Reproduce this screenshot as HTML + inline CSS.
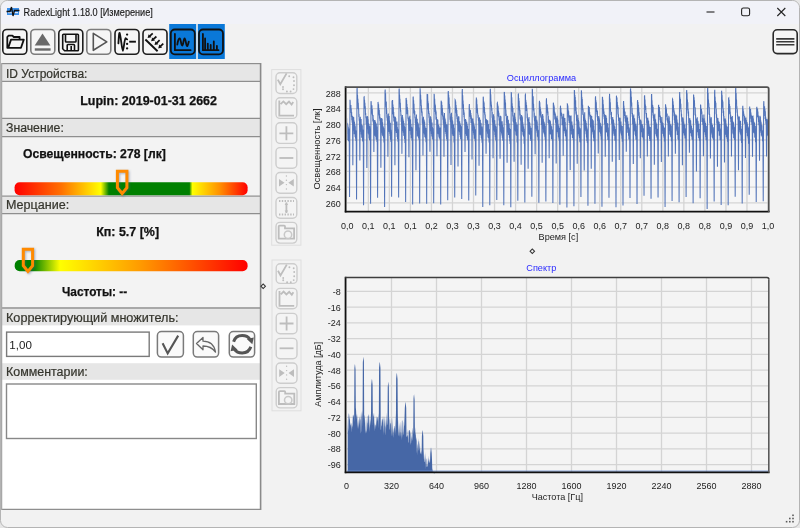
<!DOCTYPE html>
<html><head><meta charset="utf-8">
<style>
html,body{margin:0;padding:0;width:800px;height:528px;overflow:hidden;background:#e6e6e6}
svg{position:absolute;left:0;top:0;display:block;will-change:transform}
text{font-family:"Liberation Sans",sans-serif}
.grid{stroke:#d4d4d4;stroke-width:1.3}
.tk{font-size:9.8px;fill:#222}
.hd{font-size:12px;fill:#35352d;stroke:#35352d;stroke-width:0.2}
.bd{font-size:12.4px;font-weight:bold;fill:#111;stroke:#111;stroke-width:0.25}
.btn{fill:#f6f6f6;stroke:#1e1e1e;stroke-width:1.6}
.btng{fill:#f6f6f6;stroke:#7c7c7c;stroke-width:1.6}
.ic{fill:none;stroke:#111;stroke-width:1.8;stroke-linejoin:round;stroke-linecap:round}
.cb{fill:#f4f4f4;stroke:#cdcdcd;stroke-width:1.4}
.ci{fill:none;stroke:#bdbdbd;stroke-width:1.8}
.cif{fill:#bdbdbd}
</style></head><body>
<svg width="800" height="528" viewBox="0 0 800 528">
<defs>
  <linearGradient id="g1" x1="0" x2="1" y1="0" y2="0">
    <stop offset="0" stop-color="#ff0000"/>
    <stop offset="0.2" stop-color="#ff7000"/>
    <stop offset="0.37" stop-color="#ffff00"/>
    <stop offset="0.405" stop-color="#008000"/>
    <stop offset="0.75" stop-color="#008000"/>
    <stop offset="0.763" stop-color="#ffff00"/>
    <stop offset="0.88" stop-color="#ff9000"/>
    <stop offset="1" stop-color="#ff0000"/>
  </linearGradient>
  <linearGradient id="g2" x1="0" x2="1" y1="0" y2="0">
    <stop offset="0" stop-color="#008000"/>
    <stop offset="0.077" stop-color="#008000"/>
    <stop offset="0.195" stop-color="#ffff00"/>
    <stop offset="0.54" stop-color="#ff9a00"/>
    <stop offset="1" stop-color="#ff0000"/>
  </linearGradient>
  <filter id="shd" x="-50%" y="-50%" width="200%" height="200%"><feGaussianBlur stdDeviation="0.9"/></filter>
  <clipPath id="oclip"><rect x="347.3" y="88" width="421" height="123"/></clipPath>
</defs>
<!-- window -->
<rect x="0.5" y="0.5" width="799" height="527" rx="7" fill="#f2f2f2" stroke="#b4b4b4" stroke-width="1"/>
<path d="M1,24 V8 A7,7 0 0 1 8,1 H792 A7,7 0 0 1 799,8 V24 Z" fill="#f1f2f8"/>
<!-- title -->
<g>
  <rect x="7" y="8" width="12" height="7" fill="#3a8ee8"/>
  <rect x="8" y="12" width="10" height="1.2" fill="#d8e8ff"/>
  <path d="M6.5,11.5 H10 L11.5,7 L13,16 L14.5,10.5 H19.5" fill="none" stroke="#111" stroke-width="1.3"/>
</g>
<text x="23.6" y="16" style="font-size:10.6px" fill="#1a1a1a" stroke="#1a1a1a" stroke-width="0.15" textLength="129.2" lengthAdjust="spacingAndGlyphs">RadexLight 1.18.0 [Измерение]</text>
<line x1="706.5" y1="12" x2="714.5" y2="12" stroke="#222" stroke-width="1.1"/>
<rect x="741.6" y="8" width="8" height="7.8" rx="1.8" fill="none" stroke="#222" stroke-width="1.1"/>
<path d="M777.3,8 L785.3,16 M785.3,8 L777.3,16" stroke="#222" stroke-width="1.1"/>

<!-- toolbar -->
<rect x="169.2" y="24" width="27" height="35" fill="#0a78d8"/>
<rect x="197.8" y="24" width="27" height="35" fill="#0a78d8"/>
<rect x="2.8" y="29.5" width="24" height="24.8" rx="4" class="btn"/>
<rect x="30.8" y="29.5" width="24" height="24.8" rx="4" class="btng"/>
<rect x="58.8" y="29.5" width="24" height="24.8" rx="4" class="btn"/>
<rect x="86.8" y="29.5" width="24" height="24.8" rx="4" class="btng"/>
<rect x="115" y="29.5" width="24" height="24.8" rx="4" class="btn"/>
<rect x="143" y="29.5" width="24" height="24.8" rx="4" class="btn"/>
<rect x="170.8" y="29.5" width="24" height="24.8" rx="4" fill="none" stroke="#111" stroke-width="1.8"/>
<rect x="199" y="29.5" width="24" height="24.8" rx="4" fill="none" stroke="#111" stroke-width="1.8"/>
<!-- folder -->
<path class="ic" d="M7.3,47.8 V37 L8.6,35.6 H12.4 L13.8,37 H19.6 V39.3 M8.3,47.8 L11,39.6 H23.8 L21,47.8 Z"/>
<!-- eject -->
<path d="M42.5,33.4 L50.4,45.5 H34.7 Z" fill="#6a6a6a"/>
<rect x="34.8" y="48.3" width="15.8" height="2.4" fill="#6a6a6a"/>
<!-- floppy -->
<path d="M63.6,34.2 H77.6 Q78.4,34.2 78.4,35 V50 Q78.4,50.7 77.6,50.7 H64.6 L62.7,48.8 V35.1 Q62.7,34.2 63.6,34.2 Z M65.5,34.4 V41.2 Q65.5,42 66.3,42 H75.2 Q76,42 76,41.2 V34.4 M67.2,50.6 V45.3 Q67.2,44.5 68,44.5 H73.7 Q74.5,44.5 74.5,45.3 V50.6" fill="none" stroke="#111" stroke-width="1.6" stroke-linejoin="round"/>
<rect x="70.4" y="46" width="1.6" height="4.4" fill="#111"/>
<!-- play -->
<path d="M93.3,33.3 L106.8,41.9 L93.3,50.3 Z" fill="none" stroke="#555" stroke-width="1.6" stroke-linejoin="round"/>
<!-- trigger wave -->
<path class="ic" d="M118.4,43.4 C118.8,38 119,32.6 119.6,32.8 C120.6,34 122,50.8 122.8,50.8 C123.6,50.6 124.5,38.4 125.6,38.2 L127.2,39.4" stroke-width="1.9"/>
<circle cx="127.1" cy="34.6" r="1.15" fill="#111"/>
<circle cx="127.1" cy="43.9" r="1.15" fill="#111"/><circle cx="127.1" cy="48.4" r="1.15" fill="#111"/>
<line x1="129.2" y1="41.7" x2="135.9" y2="41.7" stroke="#111" stroke-width="1.9"/>
<!-- diagonal arrows -->
<line x1="145.4" y1="39.5" x2="157.6" y2="51.2" stroke="#111" stroke-width="1.9"/>
<g stroke="#111" stroke-width="1.7" fill="#111">
<path d="M152.70,33.30 L149.71,36.11"/><path d="M147.60,38.10 L148.64,34.24 L151.52,37.30 Z" stroke="none"/>
<path d="M156.40,36.50 L153.25,39.35"/><path d="M151.10,41.30 L152.21,37.46 L155.03,40.57 Z" stroke="none"/>
<path d="M159.60,40.20 L156.61,43.01"/><path d="M154.50,45.00 L155.54,41.14 L158.42,44.20 Z" stroke="none"/>
<path d="M163.30,43.60 L160.31,46.41"/><path d="M158.20,48.40 L159.24,44.54 L162.12,47.60 Z" stroke="none"/>
</g>
<!-- osc icon -->
<path class="ic" d="M174.9,34 V50.2 H190.6" stroke-width="1.9"/>
<path class="ic" d="M177.3,44.6 C178,40.5 178.8,38.2 179.8,38.4 C180.9,38.8 181,45.6 182.2,45.6 C183.3,45.6 183.5,38.4 184.6,38.4 C185.8,38.4 186,46.2 187.1,46.2 C187.9,46.2 188.3,43 188.8,41.6" stroke-width="1.9"/>
<!-- hist icon -->
<path class="ic" d="M202.9,34 V50.2 H218.5 M205.1,50 V38.4 M207.8,50 V43.6 M210.7,50 V45 M213.8,50 V41.4 M216.9,50 V45.8" stroke-width="1.9" stroke-linecap="butt"/>
<!-- menu -->
<rect x="773.2" y="29.8" width="24" height="23.8" rx="4" fill="#f6f6f6" stroke="#2a2a2a" stroke-width="1.6"/>
<path d="M776.2,38.9 H794.4 M776.2,41.8 H794.4 M776.2,44.7 H794.4" stroke="#3a3a3a" stroke-width="1.6"/>

<!-- left panel -->
<rect x="1.5" y="63.5" width="259.3" height="446" fill="#ffffff"/>
<rect x="2" y="64.3" width="258.5" height="16.6" fill="#e6e6e6"/>
<rect x="2" y="82" width="257.8" height="36" fill="#f3f3f3"/>
<rect x="2" y="119" width="258.5" height="17.2" fill="#e6e6e6"/>
<rect x="2" y="137" width="257.8" height="58.8" fill="#f3f3f3"/>
<rect x="2" y="196.8" width="258.5" height="16.4" fill="#e6e6e6"/>
<rect x="2" y="214" width="257.8" height="93.6" fill="#f3f3f3"/>
<rect x="2" y="308.6" width="258.5" height="16.8" fill="#e6e6e6"/>
<rect x="2" y="363.2" width="258.5" height="16.6" fill="#e6e6e6"/>
<g stroke="#8e8e8e" stroke-width="1.3">
  <line x1="1.5" y1="63.6" x2="261" y2="63.6"/>
  <line x1="1.5" y1="81.4" x2="260" y2="81.4"/>
  <line x1="1.5" y1="118.4" x2="260" y2="118.4"/>
  <line x1="1.5" y1="136.6" x2="260" y2="136.6"/>
  <line x1="1.5" y1="196.2" x2="260" y2="196.2"/>
  <line x1="1.5" y1="213.6" x2="260" y2="213.6"/>
  <line x1="1.5" y1="308" x2="260" y2="308"/>
  <line x1="1.5" y1="509.4" x2="261" y2="509.4"/>
</g>
<line x1="1.6" y1="63" x2="1.6" y2="510" stroke="#a8a8a8" stroke-width="1.3"/>
<line x1="260.6" y1="63" x2="260.6" y2="510" stroke="#8a8a8a" stroke-width="1.6"/>

<text x="6.0" y="77.5" class="hd" textLength="81.4" lengthAdjust="spacingAndGlyphs">ID Устройства:</text>
<text x="6.0" y="131.8" class="hd" textLength="57.8" lengthAdjust="spacingAndGlyphs">Значение:</text>
<text x="6.0" y="209.3" class="hd" textLength="63.2" lengthAdjust="spacingAndGlyphs">Мерцание:</text>
<text x="6.0" y="321.6" class="hd" textLength="172.5" lengthAdjust="spacingAndGlyphs">Корректирующий множитель:</text>
<text x="6.0" y="376" class="hd" textLength="81.8" lengthAdjust="spacingAndGlyphs">Комментарии:</text>

<text x="80.2" y="105.2" class="bd" textLength="136.8" lengthAdjust="spacingAndGlyphs">Lupin: 2019-01-31 2662</text>
<text x="23" y="158" class="bd" textLength="142.8" lengthAdjust="spacingAndGlyphs">Освещенность: 278 [лк]</text>
<text x="96.2" y="235.9" class="bd" textLength="62.9" lengthAdjust="spacingAndGlyphs">Кп: 5.7 [%]</text>
<text x="62" y="295.5" class="bd" textLength="65.2" lengthAdjust="spacingAndGlyphs">Частоты: --</text>

<rect x="14.6" y="182.3" width="233" height="12.9" rx="5" fill="url(#g1)"/>
<rect x="14.7" y="260.1" width="232.9" height="11.1" rx="5" fill="url(#g2)"/>
<path d="M118.4,172.3 H127.9 V188.6 L123.15,194.5 L118.4,188.6 Z" fill="none" stroke="#4a5a80" stroke-opacity="0.45" stroke-width="3" filter="url(#shd)"/>
<path d="M117.4,171.3 H126.9 V187.6 L122.15,193.5 L117.4,187.6 Z" fill="none" stroke="#ff8a00" stroke-width="3" stroke-linejoin="miter"/>
<path d="M24.3,250.3 H33.6 V266.6 L28.95,272.4 L24.3,266.6 Z" fill="none" stroke="#4a5a80" stroke-opacity="0.45" stroke-width="3" filter="url(#shd)"/>
<path d="M23.3,249.3 H32.6 V265.6 L27.95,271.4 L23.3,265.6 Z" fill="none" stroke="#ff8a00" stroke-width="3" stroke-linejoin="miter"/>

<rect x="6.6" y="332.1" width="142.6" height="24.3" fill="#fff" stroke="#7a7a7a" stroke-width="1.4"/>
<text x="9.3" y="349.3" style="font-size:11.6px" fill="#222">1,00</text>
<rect x="157.4" y="331.5" width="26" height="25.6" rx="4" fill="#fafafa" stroke="#7a7a7a" stroke-width="1.5"/>
<rect x="193.3" y="331.5" width="25.3" height="25.6" rx="4" fill="#fafafa" stroke="#7a7a7a" stroke-width="1.5"/>
<rect x="229.3" y="331.5" width="25.3" height="25.6" rx="4" fill="#fafafa" stroke="#7a7a7a" stroke-width="1.5"/>
<path d="M162.6,343.2 L167.7,353.4 L178.2,335.6" fill="none" stroke="#555" stroke-width="2.1" stroke-linejoin="miter"/>
<path d="M196.5,343.5 L203,337.5 V341.2 C209,341.2 214,344 215.5,352 C212.5,348 208.5,346 203,346 V349.8 Z" fill="#f8f8f8" stroke="#666" stroke-width="1.3" stroke-linejoin="round"/>
<g fill="none" stroke="#555" stroke-width="3">
  <path d="M233.6,341.8 C235,337.2 238.2,335.6 242.2,335.6 C245.8,335.6 248.4,336.9 249.9,339.2"/>
  <path d="M250.8,346.8 C249.4,351.4 246.2,353 242.2,353 C238.6,353 236,351.7 234.5,349.4"/>
</g>
<path d="M246.8,338.9 L253.8,337.4 L252.3,344.2 Z" fill="#555"/>
<path d="M237.6,349.7 L230.6,351.2 L232.1,344.4 Z" fill="#555"/>

<rect x="6.5" y="384" width="249.8" height="54.5" fill="#fff" stroke="#888" stroke-width="1.4"/>

<!-- resize grip -->
<g fill="#5a5a5a">
  <rect x="792.2" y="514.5" width="1.6" height="1.6"/>
  <rect x="789" y="517.7" width="1.6" height="1.6"/><rect x="792.2" y="517.7" width="1.6" height="1.6"/>
  <rect x="785.8" y="520.9" width="1.6" height="1.6"/><rect x="789" y="520.9" width="1.6" height="1.6"/><rect x="792.2" y="520.9" width="1.6" height="1.6"/>
</g>
<!-- splitter handles -->
<rect x="261.6" y="284.7" width="3.2" height="3.2" transform="rotate(45 263.2 286.3)" fill="none" stroke="#333" stroke-width="1"/>
<rect x="530.7" y="249.7" width="3.2" height="3.2" transform="rotate(45 532.3 251.3)" fill="none" stroke="#333" stroke-width="1"/>

<!-- chart toolbars -->
<rect x="271.7" y="69.6" width="29.2" height="175.6" fill="none" stroke="#dedede" stroke-width="1"/>
<rect x="272" y="260" width="29" height="150.8" fill="none" stroke="#dedede" stroke-width="1"/>
<g id="ctb1">
  <rect x="276.0" y="72.8" width="20.8" height="20.7" rx="4" class="cb"/>
  <rect x="276.0" y="97.7" width="20.8" height="20.7" rx="4" class="cb"/>
  <rect x="276.0" y="122.7" width="20.8" height="20.7" rx="4" class="cb"/>
  <rect x="276.0" y="147.6" width="20.8" height="20.7" rx="4" class="cb"/>
  <rect x="276.0" y="172.5" width="20.8" height="20.7" rx="4" class="cb"/>
  <rect x="276.0" y="197.5" width="20.8" height="20.7" rx="4" class="cb"/>
  <rect x="276.0" y="222.4" width="20.8" height="20.7" rx="4" class="cb"/>
  <!-- icons -->
  <path class="ci" d="M277.8,79.6 L280.3,84.2 L286.6,73.4" stroke-width="2.4"/>
  <g class="cif"><circle cx="289.2" cy="76.3" r="0.95"/><circle cx="293.5" cy="77.3" r="0.95"/><circle cx="294" cy="81" r="0.95"/><circle cx="294" cy="85.3" r="0.95"/><circle cx="293.5" cy="89.1" r="0.95"/><circle cx="290.6" cy="91.5" r="0.95"/><circle cx="286.9" cy="91.5" r="0.95"/><circle cx="283" cy="89.2" r="0.95"/><circle cx="283" cy="87" r="0.95"/></g>
  <path class="ci" d="M279.3,100.5 V115.6 H294 M280.6,104.2 L283.4,101.4 L286.2,104.2 L289,101.6 L291.6,104.6 L293.2,102" stroke-width="1.5"/>
  <path class="ci" d="M279.4,133.3 H293.3 M286.4,126.3 V140.2" stroke-width="2.3"/>
  <path class="ci" d="M279.4,158 H293.3" stroke-width="2.4"/>
  <path class="cif" d="M279,179 L284.5,182.8 L279,186.6 Z M293.8,179 L288.3,182.8 L293.8,186.6 Z"/>
  <g class="cif"><circle cx="286.4" cy="176" r="0.7"/><circle cx="286.4" cy="180.3" r="0.7"/><circle cx="286.4" cy="184.6" r="0.7"/><circle cx="286.4" cy="189" r="0.7"/></g>
  <path class="ci" d="M279,201 H294 M279,214.5 H294" stroke-dasharray="1.4 1.4" stroke-width="1.2"/>
  <path class="ci" d="M286.4,202.5 V213" stroke-width="1"/>
  <path class="cif" d="M286.4,202.5 L284.6,205 H288.2 Z M286.4,213 L284.6,210.5 H288.2 Z"/>
  <path class="ci" d="M278.7,238.6 V226.6 Q278.7,225.7 279.7,225.7 H284.2 Q285,225.7 285,226.6 V228.3 H294.1 V238.6 Z" stroke-width="1.5"/>
  <circle cx="288" cy="234.7" r="3.7" fill="#f4f4f4" stroke="#c8c8c8" stroke-width="1.5"/>
</g>

<g>
  <rect x="276.2" y="263.7" width="20.8" height="19.7" rx="4" class="cb"/>
  <rect x="276.2" y="288.4" width="20.8" height="20.3" rx="4" class="cb"/>
  <rect x="276.2" y="313.4" width="20.8" height="20.3" rx="4" class="cb"/>
  <rect x="276.2" y="338.4" width="20.8" height="20.3" rx="4" class="cb"/>
  <rect x="276.2" y="363.0" width="20.8" height="20.3" rx="4" class="cb"/>
  <rect x="276.2" y="387.6" width="20.8" height="20.3" rx="4" class="cb"/>
  <path class="ci" d="M278,270.8 L280.5,275.4 L286.8,264.6" stroke-width="2.4"/>
  <g class="cif"><circle cx="289.4" cy="267.3" r="0.95"/><circle cx="293.7" cy="268.3" r="0.95"/><circle cx="294.2" cy="272" r="0.95"/><circle cx="294.2" cy="276.3" r="0.95"/><circle cx="293.7" cy="280.1" r="0.95"/><circle cx="290.8" cy="282.3" r="0.95"/><circle cx="287.1" cy="282.3" r="0.95"/><circle cx="283.2" cy="280.2" r="0.95"/><circle cx="283.2" cy="278" r="0.95"/></g>
  <path class="ci" d="M279.5,291 V305.8 H294.2 M280.8,294.4 L283.6,291.6 L286.4,294.4 L289.2,291.8 L291.8,294.8 L293.4,292.2" stroke-width="1.5"/>
  <path class="ci" d="M279.6,323.5 H293.5 M286.6,316.5 V330.4" stroke-width="2.3"/>
  <path class="ci" d="M279.6,348.3 H293.5" stroke-width="2.4"/>
  <path class="cif" d="M279.2,369.3 L284.7,373.1 L279.2,376.9 Z M294,369.3 L288.5,373.1 L294,376.9 Z"/>
  <g class="cif"><circle cx="286.6" cy="366.3" r="0.7"/><circle cx="286.6" cy="370.6" r="0.7"/><circle cx="286.6" cy="374.9" r="0.7"/><circle cx="286.6" cy="379.3" r="0.7"/></g>
  <path class="ci" d="M278.9,404 V392 Q278.9,391.1 279.9,391.1 H284.4 Q285.2,391.1 285.2,392 V393.7 H294.3 V404 Z" stroke-width="1.5"/>
  <circle cx="288.2" cy="400.1" r="3.7" fill="#f4f4f4" stroke="#c8c8c8" stroke-width="1.5"/>
</g>

<!-- oscillogram -->
<text x="506.8" y="80.8" style="font-size:9px" fill="#2a2aff" textLength="69.4" lengthAdjust="spacingAndGlyphs">Осциллограмма</text>
<rect x="347" y="87.5" width="421.5" height="124" fill="#f6f6f6"/>
<line x1="347" y1="202.80" x2="768" y2="202.80" class="grid"/>
<text x="340.8" y="206.60" class="tk" text-anchor="end" textLength="15.0" lengthAdjust="spacingAndGlyphs">260</text>
<line x1="347" y1="187.10" x2="768" y2="187.10" class="grid"/>
<text x="340.8" y="190.90" class="tk" text-anchor="end" textLength="15.0" lengthAdjust="spacingAndGlyphs">264</text>
<line x1="347" y1="171.40" x2="768" y2="171.40" class="grid"/>
<text x="340.8" y="175.20" class="tk" text-anchor="end" textLength="15.0" lengthAdjust="spacingAndGlyphs">268</text>
<line x1="347" y1="155.70" x2="768" y2="155.70" class="grid"/>
<text x="340.8" y="159.50" class="tk" text-anchor="end" textLength="15.0" lengthAdjust="spacingAndGlyphs">272</text>
<line x1="347" y1="140.00" x2="768" y2="140.00" class="grid"/>
<text x="340.8" y="143.80" class="tk" text-anchor="end" textLength="15.0" lengthAdjust="spacingAndGlyphs">276</text>
<line x1="347" y1="124.30" x2="768" y2="124.30" class="grid"/>
<text x="340.8" y="128.10" class="tk" text-anchor="end" textLength="15.0" lengthAdjust="spacingAndGlyphs">280</text>
<line x1="347" y1="108.60" x2="768" y2="108.60" class="grid"/>
<text x="340.8" y="112.40" class="tk" text-anchor="end" textLength="15.0" lengthAdjust="spacingAndGlyphs">284</text>
<line x1="347" y1="92.90" x2="768" y2="92.90" class="grid"/>
<text x="340.8" y="96.70" class="tk" text-anchor="end" textLength="15.0" lengthAdjust="spacingAndGlyphs">288</text>
<text x="347.30" y="229" class="tk" text-anchor="middle" textLength="12.5" lengthAdjust="spacingAndGlyphs">0,0</text>
<line x1="368.34" y1="88" x2="368.34" y2="211" class="grid"/>
<text x="368.34" y="229" class="tk" text-anchor="middle" textLength="12.5" lengthAdjust="spacingAndGlyphs">0,1</text>
<line x1="389.37" y1="88" x2="389.37" y2="211" class="grid"/>
<text x="389.37" y="229" class="tk" text-anchor="middle" textLength="12.5" lengthAdjust="spacingAndGlyphs">0,1</text>
<line x1="410.41" y1="88" x2="410.41" y2="211" class="grid"/>
<text x="410.41" y="229" class="tk" text-anchor="middle" textLength="12.5" lengthAdjust="spacingAndGlyphs">0,1</text>
<line x1="431.44" y1="88" x2="431.44" y2="211" class="grid"/>
<text x="431.44" y="229" class="tk" text-anchor="middle" textLength="12.5" lengthAdjust="spacingAndGlyphs">0,2</text>
<line x1="452.48" y1="88" x2="452.48" y2="211" class="grid"/>
<text x="452.48" y="229" class="tk" text-anchor="middle" textLength="12.5" lengthAdjust="spacingAndGlyphs">0,3</text>
<line x1="473.51" y1="88" x2="473.51" y2="211" class="grid"/>
<text x="473.51" y="229" class="tk" text-anchor="middle" textLength="12.5" lengthAdjust="spacingAndGlyphs">0,3</text>
<line x1="494.55" y1="88" x2="494.55" y2="211" class="grid"/>
<text x="494.55" y="229" class="tk" text-anchor="middle" textLength="12.5" lengthAdjust="spacingAndGlyphs">0,3</text>
<line x1="515.58" y1="88" x2="515.58" y2="211" class="grid"/>
<text x="515.58" y="229" class="tk" text-anchor="middle" textLength="12.5" lengthAdjust="spacingAndGlyphs">0,4</text>
<line x1="536.62" y1="88" x2="536.62" y2="211" class="grid"/>
<text x="536.62" y="229" class="tk" text-anchor="middle" textLength="12.5" lengthAdjust="spacingAndGlyphs">0,5</text>
<line x1="557.65" y1="88" x2="557.65" y2="211" class="grid"/>
<text x="557.65" y="229" class="tk" text-anchor="middle" textLength="12.5" lengthAdjust="spacingAndGlyphs">0,5</text>
<line x1="578.68" y1="88" x2="578.68" y2="211" class="grid"/>
<text x="578.68" y="229" class="tk" text-anchor="middle" textLength="12.5" lengthAdjust="spacingAndGlyphs">0,6</text>
<line x1="599.72" y1="88" x2="599.72" y2="211" class="grid"/>
<text x="599.72" y="229" class="tk" text-anchor="middle" textLength="12.5" lengthAdjust="spacingAndGlyphs">0,6</text>
<line x1="620.75" y1="88" x2="620.75" y2="211" class="grid"/>
<text x="620.75" y="229" class="tk" text-anchor="middle" textLength="12.5" lengthAdjust="spacingAndGlyphs">0,7</text>
<line x1="641.79" y1="88" x2="641.79" y2="211" class="grid"/>
<text x="641.79" y="229" class="tk" text-anchor="middle" textLength="12.5" lengthAdjust="spacingAndGlyphs">0,7</text>
<line x1="662.83" y1="88" x2="662.83" y2="211" class="grid"/>
<text x="662.83" y="229" class="tk" text-anchor="middle" textLength="12.5" lengthAdjust="spacingAndGlyphs">0,8</text>
<line x1="683.86" y1="88" x2="683.86" y2="211" class="grid"/>
<text x="683.86" y="229" class="tk" text-anchor="middle" textLength="12.5" lengthAdjust="spacingAndGlyphs">0,8</text>
<line x1="704.89" y1="88" x2="704.89" y2="211" class="grid"/>
<text x="704.89" y="229" class="tk" text-anchor="middle" textLength="12.5" lengthAdjust="spacingAndGlyphs">0,8</text>
<line x1="725.93" y1="88" x2="725.93" y2="211" class="grid"/>
<text x="725.93" y="229" class="tk" text-anchor="middle" textLength="12.5" lengthAdjust="spacingAndGlyphs">0,9</text>
<line x1="746.97" y1="88" x2="746.97" y2="211" class="grid"/>
<text x="746.97" y="229" class="tk" text-anchor="middle" textLength="12.5" lengthAdjust="spacingAndGlyphs">0,9</text>
<line x1="768.00" y1="88" x2="768.00" y2="211" class="grid"/>
<text x="768.00" y="229" class="tk" text-anchor="middle" textLength="12.5" lengthAdjust="spacingAndGlyphs">1,0</text>
<path d="M342.53,198.61 L342.95,105.01 L343.14,105.18 L343.32,112.37 L343.51,104.48 L343.69,113.33 L343.88,108.43 L344.06,116.08 L344.25,110.91 L344.44,117.37 L344.62,112.67 L344.81,120.64 L344.99,117.32 L345.18,122.70 L345.36,119.30 L345.55,124.37 L345.83,163.41 L346.11,124.26 L346.31,118.99 L346.50,133.38 L346.70,118.22 L346.90,131.15 L347.09,122.82 L347.29,133.69 L347.49,123.26 L347.69,139.94 L347.88,125.03 L348.08,138.04 L348.28,126.86 L348.47,141.03 L348.67,128.94 L348.87,141.39 L349.07,128.54 L349.26,142.29 L349.54,197.03 L349.96,99.71 L350.15,101.29 L350.34,108.81 L350.52,105.96 L350.71,109.05 L350.89,105.07 L351.08,112.88 L351.26,108.41 L351.45,116.92 L351.63,111.96 L351.82,120.35 L352.00,115.47 L352.19,122.86 L352.37,116.05 L352.56,125.11 L352.84,165.29 L353.12,121.62 L353.32,116.81 L353.51,126.51 L353.71,117.25 L353.91,130.63 L354.11,120.42 L354.30,134.25 L354.50,122.04 L354.70,133.53 L354.89,124.50 L355.09,137.05 L355.29,126.26 L355.49,138.59 L355.68,130.15 L355.88,141.07 L356.08,131.14 L356.27,141.53 L356.56,199.61 L356.98,89.20 L357.16,87.46 L357.35,98.58 L357.53,95.00 L357.72,102.50 L357.90,98.80 L358.09,108.75 L358.27,102.78 L358.46,109.24 L358.64,108.39 L358.83,116.91 L359.01,114.09 L359.20,120.81 L359.39,118.99 L359.57,127.39 L359.85,160.57 L360.13,124.57 L360.33,116.80 L360.53,128.81 L360.72,119.62 L360.92,131.83 L361.12,118.98 L361.31,134.56 L361.51,124.17 L361.71,137.84 L361.91,124.99 L362.10,135.64 L362.30,125.42 L362.50,140.66 L362.69,129.61 L362.89,141.75 L363.09,129.72 L363.29,143.03 L363.57,205.17 L363.99,96.94 L364.17,96.80 L364.36,104.51 L364.54,99.67 L364.73,108.14 L364.91,102.83 L365.10,109.02 L365.28,106.28 L365.47,115.08 L365.66,112.98 L365.84,118.20 L366.03,116.91 L366.21,124.24 L366.40,116.63 L366.58,124.90 L366.86,167.94 L367.14,122.66 L367.34,115.97 L367.54,129.20 L367.73,116.65 L367.93,127.23 L368.13,119.30 L368.33,133.47 L368.52,123.27 L368.72,134.55 L368.92,123.97 L369.12,138.12 L369.31,125.64 L369.51,140.19 L369.71,126.34 L369.90,139.22 L370.10,128.45 L370.30,143.40 L370.58,203.82 L371.00,102.11 L371.18,101.17 L371.37,108.84 L371.56,105.34 L371.74,113.27 L371.93,105.38 L372.11,114.47 L372.30,109.09 L372.48,115.75 L372.67,114.68 L372.85,121.12 L373.04,114.98 L373.22,122.42 L373.41,118.65 L373.59,124.46 L373.87,152.05 L374.15,125.84 L374.35,120.36 L374.55,130.54 L374.75,120.03 L374.94,135.84 L375.14,120.40 L375.34,134.00 L375.54,121.99 L375.73,136.93 L375.93,125.83 L376.13,139.54 L376.32,123.52 L376.52,139.82 L376.72,126.41 L376.92,142.05 L377.11,129.95 L377.31,145.04 L377.59,197.85 L378.01,101.92 L378.20,103.61 L378.38,108.05 L378.57,104.15 L378.75,113.69 L378.94,108.02 L379.12,115.61 L379.31,110.12 L379.49,118.44 L379.68,113.92 L379.86,120.84 L380.05,116.92 L380.23,124.92 L380.42,118.29 L380.61,124.66 L380.89,167.74 L381.17,122.47 L381.36,118.38 L381.56,131.50 L381.76,118.11 L381.96,132.67 L382.15,119.02 L382.35,134.83 L382.55,122.35 L382.74,135.87 L382.94,125.71 L383.14,136.54 L383.34,126.69 L383.53,138.32 L383.73,128.34 L383.93,142.44 L384.12,130.21 L384.32,142.68 L384.60,206.91 L385.02,91.16 L385.21,89.54 L385.39,100.45 L385.58,93.22 L385.76,104.20 L385.95,101.23 L386.13,107.42 L386.32,101.86 L386.51,114.07 L386.69,109.51 L386.88,117.63 L387.06,114.19 L387.25,120.72 L387.43,118.38 L387.62,126.86 L387.90,156.77 L388.18,119.81 L388.38,113.42 L388.57,128.26 L388.77,117.94 L388.97,131.71 L389.16,115.98 L389.36,131.88 L389.56,120.46 L389.76,133.75 L389.95,122.84 L390.15,135.90 L390.35,122.70 L390.54,139.65 L390.74,129.72 L390.94,141.88 L391.14,131.68 L391.33,141.72 L391.61,196.85 L392.03,101.20 L392.22,100.64 L392.41,107.11 L392.59,100.03 L392.78,113.70 L392.96,104.43 L393.15,114.51 L393.33,106.93 L393.52,117.72 L393.70,111.96 L393.89,121.52 L394.07,116.12 L394.26,120.76 L394.44,116.86 L394.63,126.42 L394.91,165.33 L395.19,123.73 L395.39,116.77 L395.58,129.03 L395.78,118.31 L395.98,131.08 L396.18,121.70 L396.37,133.01 L396.57,122.18 L396.77,133.11 L396.96,121.53 L397.16,137.04 L397.36,127.11 L397.56,138.90 L397.75,128.86 L397.95,141.80 L398.15,130.07 L398.34,144.18 L398.63,197.45 L399.05,89.50 L399.23,88.62 L399.42,97.85 L399.60,94.68 L399.79,103.62 L399.97,98.72 L400.16,107.78 L400.34,102.78 L400.53,111.74 L400.71,109.68 L400.90,116.36 L401.08,114.37 L401.27,122.01 L401.46,117.64 L401.64,128.72 L401.92,153.87 L402.20,119.31 L402.40,114.94 L402.60,128.16 L402.79,117.40 L402.99,131.09 L403.19,119.42 L403.38,132.67 L403.58,121.09 L403.78,135.73 L403.98,123.06 L404.17,136.05 L404.37,125.75 L404.57,139.02 L404.76,126.96 L404.96,142.87 L405.16,129.26 L405.36,142.41 L405.64,202.03 L406.06,97.96 L406.24,98.34 L406.43,105.78 L406.61,99.97 L406.80,108.24 L406.98,103.97 L407.17,114.32 L407.35,106.92 L407.54,114.04 L407.73,109.68 L407.91,118.73 L408.10,116.62 L408.28,121.17 L408.47,118.09 L408.65,129.35 L408.93,157.22 L409.21,122.48 L409.41,117.35 L409.61,129.24 L409.80,115.87 L410.00,130.93 L410.20,119.30 L410.40,130.07 L410.59,119.54 L410.79,134.67 L410.99,124.11 L411.19,138.32 L411.38,126.79 L411.58,138.05 L411.78,127.35 L411.97,140.54 L412.17,128.58 L412.37,143.81 L412.65,204.57 L413.07,97.37 L413.25,96.53 L413.44,103.86 L413.63,100.21 L413.81,109.18 L414.00,103.69 L414.18,113.55 L414.37,109.86 L414.55,114.80 L414.74,111.11 L414.92,118.60 L415.11,116.79 L415.29,122.95 L415.48,118.70 L415.66,127.06 L415.94,170.21 L416.22,121.16 L416.42,114.59 L416.62,128.09 L416.82,118.67 L417.01,130.65 L417.21,118.83 L417.41,136.44 L417.61,122.06 L417.80,133.92 L418.00,122.97 L418.20,134.35 L418.39,124.36 L418.59,138.28 L418.79,127.53 L418.99,139.65 L419.18,130.70 L419.38,142.80 L419.66,203.55 L420.08,88.32 L420.27,90.71 L420.45,99.08 L420.64,94.70 L420.82,101.64 L421.01,99.49 L421.19,105.95 L421.38,105.25 L421.56,112.70 L421.75,108.67 L421.93,115.84 L422.12,111.44 L422.30,123.47 L422.49,118.61 L422.68,125.41 L422.96,155.42 L423.24,125.27 L423.43,116.72 L423.63,130.09 L423.83,119.18 L424.03,133.14 L424.22,120.15 L424.42,134.52 L424.62,121.77 L424.81,137.16 L425.01,126.16 L425.21,137.33 L425.41,127.66 L425.60,138.40 L425.80,128.05 L426.00,142.30 L426.19,130.02 L426.39,143.23 L426.67,203.84 L427.09,94.89 L427.28,93.90 L427.46,99.94 L427.65,94.27 L427.83,102.90 L428.02,101.30 L428.20,109.39 L428.39,103.33 L428.58,113.91 L428.76,110.82 L428.95,117.62 L429.13,112.90 L429.32,122.96 L429.50,119.83 L429.69,127.84 L429.97,151.83 L430.25,121.96 L430.45,116.22 L430.64,128.51 L430.84,117.17 L431.04,131.25 L431.23,119.33 L431.43,134.01 L431.63,122.50 L431.83,136.18 L432.02,122.44 L432.22,136.81 L432.42,127.01 L432.61,139.25 L432.81,128.29 L433.01,139.79 L433.21,132.17 L433.40,144.17 L433.68,203.22 L434.10,93.73 L434.29,94.94 L434.48,104.48 L434.66,98.86 L434.85,105.09 L435.03,103.75 L435.22,112.01 L435.40,105.36 L435.59,114.42 L435.77,109.69 L435.96,119.39 L436.14,111.56 L436.33,119.93 L436.51,117.02 L436.70,124.93 L436.98,156.26 L437.26,123.19 L437.46,119.25 L437.65,130.96 L437.85,119.64 L438.05,133.62 L438.25,124.50 L438.44,134.25 L438.64,124.79 L438.84,136.80 L439.03,126.21 L439.23,138.42 L439.43,130.15 L439.63,137.88 L439.82,128.23 L440.02,139.62 L440.22,127.45 L440.41,142.72 L440.70,204.43 L441.12,101.45 L441.30,100.72 L441.49,107.61 L441.67,102.11 L441.86,112.83 L442.04,104.91 L442.23,115.31 L442.41,108.13 L442.60,116.54 L442.78,112.12 L442.97,119.65 L443.15,115.59 L443.34,123.55 L443.53,120.32 L443.71,125.91 L443.99,156.84 L444.27,116.86 L444.47,112.96 L444.67,126.66 L444.86,117.86 L445.06,127.81 L445.26,119.17 L445.45,132.04 L445.65,121.65 L445.85,133.98 L446.05,124.01 L446.24,136.38 L446.44,127.06 L446.64,138.94 L446.83,124.60 L447.03,140.68 L447.23,130.22 L447.43,142.02 L447.71,200.37 L448.13,92.90 L448.31,91.11 L448.50,98.06 L448.68,94.88 L448.87,103.58 L449.05,97.54 L449.24,109.10 L449.42,103.99 L449.61,113.31 L449.80,106.48 L449.98,119.70 L450.17,113.87 L450.35,122.17 L450.54,116.47 L450.72,125.04 L451.00,164.95 L451.28,120.81 L451.48,112.87 L451.68,127.21 L451.87,117.09 L452.07,128.35 L452.27,119.72 L452.47,134.22 L452.66,121.24 L452.86,135.70 L453.06,123.90 L453.26,135.41 L453.45,124.85 L453.65,136.01 L453.85,127.83 L454.04,142.58 L454.24,130.87 L454.44,144.01 L454.72,197.46 L455.14,99.92 L455.32,100.22 L455.51,109.89 L455.70,101.49 L455.88,110.44 L456.07,105.08 L456.25,113.26 L456.44,107.81 L456.62,116.47 L456.81,110.10 L456.99,119.05 L457.18,114.38 L457.36,122.19 L457.55,120.03 L457.73,126.10 L458.01,166.39 L458.29,118.99 L458.49,116.35 L458.69,125.11 L458.89,116.54 L459.08,131.22 L459.28,121.23 L459.48,132.14 L459.68,121.20 L459.87,134.94 L460.07,123.15 L460.27,137.03 L460.46,124.72 L460.66,139.35 L460.86,127.73 L461.06,139.20 L461.25,126.34 L461.45,144.13 L461.73,198.98 L462.15,91.64 L462.34,88.94 L462.52,100.15 L462.71,95.23 L462.89,103.16 L463.08,100.46 L463.26,108.99 L463.45,104.32 L463.63,115.11 L463.82,110.20 L464.00,117.34 L464.19,112.56 L464.37,121.58 L464.56,119.75 L464.75,126.51 L465.03,151.95 L465.31,123.24 L465.50,119.03 L465.70,132.72 L465.90,119.66 L466.10,133.90 L466.29,123.74 L466.49,135.81 L466.69,121.75 L466.88,136.02 L467.08,123.75 L467.28,138.58 L467.48,125.67 L467.67,140.36 L467.87,128.78 L468.07,137.72 L468.26,129.11 L468.46,143.44 L468.74,200.60 L469.16,106.80 L469.35,103.92 L469.53,113.61 L469.72,110.13 L469.90,115.48 L470.09,109.87 L470.27,117.10 L470.46,110.24 L470.65,118.97 L470.83,113.09 L471.02,123.07 L471.20,115.16 L471.39,120.84 L471.57,117.45 L471.76,125.52 L472.04,159.47 L472.32,119.85 L472.52,118.60 L472.71,130.17 L472.91,118.52 L473.11,130.81 L473.30,121.57 L473.50,133.23 L473.70,123.17 L473.90,135.31 L474.09,124.79 L474.29,138.86 L474.49,126.45 L474.68,137.90 L474.88,129.57 L475.08,141.26 L475.28,129.15 L475.47,144.22 L475.75,195.62 L476.17,101.62 L476.36,97.44 L476.55,103.68 L476.73,99.39 L476.92,110.33 L477.10,104.32 L477.29,113.03 L477.47,108.36 L477.66,114.24 L477.84,113.48 L478.03,118.08 L478.21,114.91 L478.40,120.77 L478.58,117.75 L478.77,126.79 L479.05,165.87 L479.33,121.42 L479.53,117.39 L479.72,129.45 L479.92,119.96 L480.12,134.85 L480.32,119.81 L480.51,132.77 L480.71,122.65 L480.91,135.44 L481.10,123.23 L481.30,137.96 L481.50,127.43 L481.70,139.40 L481.89,126.63 L482.09,142.85 L482.29,128.43 L482.48,143.63 L482.77,207.10 L483.19,96.67 L483.37,97.50 L483.56,107.14 L483.74,101.28 L483.93,107.50 L484.11,102.57 L484.30,112.78 L484.48,107.07 L484.67,114.63 L484.85,111.93 L485.04,118.54 L485.22,114.51 L485.41,123.19 L485.60,118.56 L485.78,125.78 L486.06,153.78 L486.34,124.41 L486.54,119.16 L486.74,129.65 L486.93,119.93 L487.13,131.61 L487.33,120.23 L487.52,133.67 L487.72,120.41 L487.92,137.27 L488.12,124.08 L488.31,138.23 L488.51,124.29 L488.71,137.11 L488.90,131.18 L489.10,142.43 L489.30,129.23 L489.50,141.66 L489.78,205.27 L490.20,90.04 L490.38,88.88 L490.57,97.20 L490.75,94.24 L490.94,101.32 L491.12,101.87 L491.31,106.49 L491.49,104.81 L491.68,110.67 L491.87,108.33 L492.05,117.83 L492.24,112.13 L492.42,122.49 L492.61,118.53 L492.79,128.02 L493.07,158.14 L493.35,119.93 L493.55,114.33 L493.75,128.72 L493.94,116.33 L494.14,130.54 L494.34,119.93 L494.54,131.80 L494.73,120.38 L494.93,135.09 L495.13,124.20 L495.33,136.88 L495.52,125.78 L495.72,139.92 L495.92,126.51 L496.11,141.27 L496.31,129.32 L496.51,143.88 L496.79,200.11 L497.21,103.14 L497.39,102.84 L497.58,107.10 L497.77,104.42 L497.95,110.10 L498.14,106.27 L498.32,116.12 L498.51,110.78 L498.69,117.27 L498.88,112.84 L499.06,120.47 L499.25,115.98 L499.43,125.69 L499.62,118.57 L499.80,128.92 L500.08,158.86 L500.36,120.60 L500.56,115.78 L500.76,127.95 L500.96,116.58 L501.15,131.77 L501.35,121.51 L501.55,133.43 L501.75,124.07 L501.94,135.45 L502.14,121.24 L502.34,137.73 L502.53,124.69 L502.73,140.32 L502.93,127.33 L503.13,141.03 L503.32,129.98 L503.52,141.97 L503.80,205.33 L504.22,92.51 L504.41,91.97 L504.59,101.87 L504.78,95.57 L504.96,105.10 L505.15,99.45 L505.33,109.04 L505.52,102.42 L505.70,115.93 L505.89,109.44 L506.07,116.21 L506.26,113.74 L506.44,122.74 L506.63,117.84 L506.82,127.77 L507.10,162.63 L507.38,119.10 L507.57,115.89 L507.77,131.66 L507.97,120.47 L508.17,132.50 L508.36,119.69 L508.56,134.87 L508.76,123.82 L508.95,134.33 L509.15,123.48 L509.35,137.86 L509.55,128.01 L509.74,141.27 L509.94,129.23 L510.14,144.01 L510.33,129.04 L510.53,143.61 L510.81,207.19 L511.23,92.76 L511.42,92.89 L511.60,104.30 L511.79,97.17 L511.97,104.98 L512.16,103.25 L512.34,111.74 L512.53,106.23 L512.72,116.49 L512.90,107.92 L513.09,121.46 L513.27,115.32 L513.46,122.38 L513.64,117.97 L513.83,125.64 L514.11,161.81 L514.39,119.51 L514.59,112.87 L514.78,130.25 L514.98,116.64 L515.18,130.50 L515.37,118.66 L515.57,131.42 L515.77,122.30 L515.97,134.81 L516.16,122.17 L516.36,135.65 L516.56,126.39 L516.75,135.54 L516.95,124.49 L517.15,142.55 L517.35,129.46 L517.54,139.30 L517.82,200.75 L518.24,94.22 L518.43,94.05 L518.62,102.78 L518.80,98.03 L518.99,106.76 L519.17,100.69 L519.36,110.53 L519.54,106.29 L519.73,115.60 L519.91,109.73 L520.10,119.15 L520.28,113.88 L520.47,120.47 L520.65,117.10 L520.84,125.18 L521.12,164.72 L521.40,119.53 L521.60,114.97 L521.79,128.07 L521.99,115.91 L522.19,131.30 L522.39,117.27 L522.58,131.92 L522.78,122.30 L522.98,134.79 L523.17,124.35 L523.37,136.06 L523.57,126.57 L523.77,136.87 L523.96,128.81 L524.16,143.71 L524.36,130.90 L524.55,145.51 L524.84,202.49 L525.26,94.79 L525.44,94.47 L525.63,105.34 L525.81,100.13 L526.00,104.79 L526.18,102.38 L526.37,110.95 L526.55,105.09 L526.74,111.32 L526.92,108.49 L527.11,118.22 L527.29,113.51 L527.48,121.29 L527.67,118.57 L527.85,127.32 L528.13,168.69 L528.41,124.84 L528.61,118.57 L528.81,130.96 L529.00,116.93 L529.20,133.93 L529.40,121.98 L529.59,134.65 L529.79,122.88 L529.99,134.65 L530.19,125.82 L530.38,138.88 L530.58,129.06 L530.78,140.69 L530.97,127.74 L531.17,141.02 L531.37,131.53 L531.57,143.26 L531.85,196.73 L532.27,88.84 L532.45,89.94 L532.64,98.10 L532.82,96.31 L533.01,104.02 L533.19,96.28 L533.38,110.13 L533.56,103.65 L533.75,111.51 L533.94,108.39 L534.12,117.61 L534.31,112.64 L534.49,121.19 L534.68,117.36 L534.86,128.45 L535.14,154.16 L535.42,120.96 L535.62,115.72 L535.82,127.50 L536.01,116.22 L536.21,128.71 L536.41,119.92 L536.61,130.81 L536.80,119.76 L537.00,132.65 L537.20,121.59 L537.40,136.54 L537.59,125.88 L537.79,137.35 L537.99,129.65 L538.18,140.33 L538.38,130.63 L538.58,143.25 L538.86,202.78 L539.28,103.29 L539.46,100.80 L539.65,107.28 L539.84,102.31 L540.02,111.50 L540.21,106.82 L540.39,115.43 L540.58,108.90 L540.76,117.52 L540.95,111.52 L541.13,117.67 L541.32,115.29 L541.50,125.03 L541.69,119.32 L541.87,127.87 L542.15,162.82 L542.43,117.31 L542.63,114.01 L542.83,129.30 L543.03,115.65 L543.22,127.70 L543.42,119.26 L543.62,132.58 L543.82,121.45 L544.01,133.48 L544.21,122.32 L544.41,134.46 L544.60,123.76 L544.80,136.68 L545.00,125.77 L545.20,139.62 L545.39,131.97 L545.59,142.93 L545.87,201.41 L546.29,101.31 L546.48,98.32 L546.66,107.89 L546.85,103.93 L547.03,108.49 L547.22,104.82 L547.40,113.25 L547.59,107.54 L547.77,115.17 L547.96,111.42 L548.14,123.09 L548.33,115.90 L548.51,123.42 L548.70,119.40 L548.89,125.60 L549.17,158.13 L549.45,123.80 L549.64,119.67 L549.84,127.96 L550.04,120.44 L550.24,134.15 L550.43,121.21 L550.63,133.59 L550.83,124.22 L551.02,134.80 L551.22,125.64 L551.42,138.87 L551.62,126.44 L551.81,138.26 L552.01,129.27 L552.21,140.58 L552.40,130.24 L552.60,138.87 L552.88,203.03 L553.30,102.72 L553.49,103.21 L553.67,110.86 L553.86,104.68 L554.04,111.98 L554.23,106.46 L554.41,115.29 L554.60,111.55 L554.79,119.01 L554.97,112.56 L555.16,120.01 L555.34,113.87 L555.53,122.76 L555.71,116.87 L555.90,123.79 L556.18,163.52 L556.46,122.96 L556.66,117.65 L556.85,130.78 L557.05,115.84 L557.25,131.96 L557.44,118.32 L557.64,131.98 L557.84,119.65 L558.04,133.40 L558.23,124.14 L558.43,137.05 L558.63,125.88 L558.82,138.52 L559.02,128.71 L559.22,140.80 L559.42,127.77 L559.61,145.09 L559.89,204.83 L560.31,108.85 L560.50,105.65 L560.69,112.09 L560.87,108.09 L561.06,114.28 L561.24,112.30 L561.43,115.93 L561.61,113.05 L561.80,118.70 L561.98,114.08 L562.17,125.21 L562.35,117.47 L562.54,123.46 L562.72,116.40 L562.91,125.48 L563.19,155.81 L563.47,122.48 L563.67,113.71 L563.86,125.98 L564.06,117.67 L564.26,130.81 L564.46,121.98 L564.65,131.33 L564.85,118.08 L565.05,133.60 L565.24,122.10 L565.44,135.88 L565.64,127.23 L565.84,136.83 L566.03,129.61 L566.23,141.00 L566.43,129.57 L566.62,141.53 L566.91,207.58 L567.33,103.89 L567.51,104.00 L567.70,112.28 L567.88,105.43 L568.07,114.05 L568.25,109.87 L568.44,117.37 L568.62,111.31 L568.81,120.74 L568.99,115.04 L569.18,123.00 L569.36,115.50 L569.55,122.75 L569.74,115.55 L569.92,127.93 L570.20,169.93 L570.48,119.46 L570.68,116.13 L570.88,129.07 L571.07,115.50 L571.27,131.10 L571.47,121.46 L571.66,134.46 L571.86,121.43 L572.06,134.25 L572.26,125.79 L572.45,138.05 L572.65,125.19 L572.85,137.92 L573.04,128.83 L573.24,139.87 L573.44,129.18 L573.64,145.20 L573.92,206.31 L574.34,90.06 L574.52,90.94 L574.71,101.63 L574.89,95.07 L575.08,102.19 L575.26,97.04 L575.45,110.76 L575.63,100.15 L575.82,113.83 L576.01,106.95 L576.19,115.12 L576.38,111.45 L576.56,121.14 L576.75,118.92 L576.93,125.01 L577.21,163.85 L577.49,127.20 L577.69,114.78 L577.89,130.29 L578.08,117.81 L578.28,134.15 L578.48,119.93 L578.68,132.36 L578.87,121.45 L579.07,136.21 L579.27,126.88 L579.47,138.07 L579.66,129.90 L579.86,141.80 L580.06,128.38 L580.25,142.47 L580.45,130.38 L580.65,142.90 L580.93,196.95 L581.35,90.33 L581.53,91.58 L581.72,98.30 L581.91,96.91 L582.09,104.74 L582.28,98.91 L582.46,110.30 L582.65,104.86 L582.83,114.73 L583.02,108.63 L583.20,114.99 L583.39,114.15 L583.57,121.24 L583.76,118.66 L583.94,127.45 L584.22,170.60 L584.50,118.41 L584.70,112.30 L584.90,127.69 L585.10,118.59 L585.29,129.44 L585.49,120.12 L585.69,131.36 L585.89,121.32 L586.08,134.14 L586.28,122.94 L586.48,137.37 L586.67,126.39 L586.87,141.00 L587.07,128.49 L587.27,142.64 L587.46,130.14 L587.66,144.06 L587.94,205.64 L588.36,105.77 L588.55,106.74 L588.73,113.32 L588.92,108.36 L589.10,113.46 L589.29,107.00 L589.47,115.59 L589.66,112.10 L589.84,117.02 L590.03,115.98 L590.21,119.25 L590.40,117.08 L590.58,127.41 L590.77,114.81 L590.96,123.70 L591.24,168.68 L591.52,120.35 L591.71,116.00 L591.91,128.36 L592.11,119.78 L592.31,131.47 L592.50,119.14 L592.70,132.27 L592.90,120.17 L593.09,134.50 L593.29,120.62 L593.49,137.63 L593.69,125.53 L593.88,141.31 L594.08,129.64 L594.28,138.89 L594.47,131.25 L594.67,142.02 L594.95,203.74 L595.37,98.19 L595.56,96.31 L595.74,104.65 L595.93,100.16 L596.11,106.56 L596.30,102.25 L596.48,112.04 L596.67,108.04 L596.86,114.52 L597.04,110.59 L597.23,117.15 L597.41,110.46 L597.60,121.06 L597.78,117.81 L597.97,126.11 L598.25,153.53 L598.53,120.69 L598.73,116.03 L598.92,128.06 L599.12,117.41 L599.32,128.67 L599.51,119.55 L599.71,132.14 L599.91,122.85 L600.11,131.78 L600.30,122.66 L600.50,133.76 L600.70,124.44 L600.89,136.35 L601.09,128.05 L601.29,139.59 L601.49,126.17 L601.68,144.43 L601.96,206.63 L602.38,96.86 L602.57,97.52 L602.76,104.98 L602.94,99.65 L603.13,110.26 L603.31,104.14 L603.50,113.87 L603.68,108.97 L603.87,116.82 L604.05,111.53 L604.24,119.05 L604.42,113.99 L604.61,124.56 L604.79,115.15 L604.98,124.24 L605.26,156.80 L605.54,120.07 L605.74,114.89 L605.93,126.85 L606.13,116.34 L606.33,132.14 L606.53,118.04 L606.72,127.84 L606.92,123.85 L607.12,132.70 L607.31,122.89 L607.51,136.42 L607.71,123.64 L607.91,140.09 L608.10,127.50 L608.30,138.52 L608.50,130.17 L608.69,143.34 L608.98,197.71 L609.40,97.56 L609.58,93.81 L609.77,105.37 L609.95,98.39 L610.14,109.49 L610.32,102.31 L610.51,111.50 L610.69,110.53 L610.88,114.99 L611.06,112.02 L611.25,119.24 L611.43,111.97 L611.62,123.82 L611.81,119.27 L611.99,123.84 L612.27,161.71 L612.55,120.20 L612.75,116.93 L612.95,131.32 L613.14,119.30 L613.34,130.15 L613.54,119.68 L613.73,133.69 L613.93,122.76 L614.13,135.66 L614.33,125.45 L614.52,134.59 L614.72,126.44 L614.92,140.72 L615.11,128.93 L615.31,139.91 L615.51,129.16 L615.71,142.94 L615.99,207.30 L616.41,95.63 L616.59,97.18 L616.78,104.84 L616.96,97.50 L617.15,107.49 L617.33,101.91 L617.52,108.91 L617.70,105.33 L617.89,114.41 L618.08,107.06 L618.26,117.31 L618.45,114.37 L618.63,121.03 L618.82,117.11 L619.00,127.08 L619.28,160.08 L619.56,120.28 L619.76,117.99 L619.96,128.28 L620.15,117.71 L620.35,130.76 L620.55,121.74 L620.75,132.74 L620.94,121.57 L621.14,134.20 L621.34,125.22 L621.54,135.55 L621.73,127.44 L621.93,138.86 L622.13,125.98 L622.32,141.62 L622.52,130.64 L622.72,141.23 L623.00,205.48 L623.42,103.00 L623.60,100.93 L623.79,107.46 L623.98,107.18 L624.16,112.93 L624.35,108.31 L624.53,116.11 L624.72,110.92 L624.90,118.59 L625.09,112.11 L625.27,121.48 L625.46,115.18 L625.64,122.48 L625.83,119.21 L626.01,125.69 L626.29,151.72 L626.57,118.74 L626.77,115.31 L626.97,127.38 L627.17,117.91 L627.36,129.12 L627.56,117.61 L627.76,132.86 L627.96,121.33 L628.15,132.35 L628.35,123.94 L628.55,135.86 L628.74,126.89 L628.94,139.48 L629.14,128.38 L629.34,137.55 L629.53,130.43 L629.73,143.48 L630.01,198.01 L630.43,89.96 L630.62,88.41 L630.80,97.66 L630.99,91.15 L631.17,102.29 L631.36,96.64 L631.54,106.86 L631.73,102.46 L631.91,113.88 L632.10,108.12 L632.28,116.65 L632.47,112.94 L632.65,124.17 L632.84,116.05 L633.03,126.40 L633.31,163.96 L633.59,119.39 L633.78,114.58 L633.98,126.60 L634.18,118.24 L634.38,130.66 L634.57,118.32 L634.77,131.41 L634.97,121.47 L635.16,134.63 L635.36,124.32 L635.56,136.15 L635.76,123.78 L635.95,139.75 L636.15,125.54 L636.35,139.36 L636.54,130.48 L636.74,141.67 L637.02,203.91 L637.44,101.84 L637.63,100.12 L637.81,106.82 L638.00,102.06 L638.18,110.24 L638.37,104.75 L638.55,115.73 L638.74,107.47 L638.93,118.01 L639.11,112.33 L639.30,119.90 L639.48,116.28 L639.67,124.48 L639.85,119.34 L640.04,125.89 L640.32,158.20 L640.60,122.57 L640.80,119.67 L640.99,132.01 L641.19,121.26 L641.39,132.00 L641.58,124.48 L641.78,132.60 L641.98,124.04 L642.18,137.07 L642.37,124.60 L642.57,136.26 L642.77,126.28 L642.96,137.92 L643.16,128.25 L643.36,139.37 L643.56,128.42 L643.75,142.88 L644.03,195.68 L644.45,96.05 L644.64,95.27 L644.83,104.80 L645.01,99.51 L645.20,106.18 L645.38,104.64 L645.57,110.08 L645.75,106.08 L645.94,114.32 L646.12,113.31 L646.31,118.56 L646.49,113.11 L646.68,123.19 L646.86,117.60 L647.05,129.14 L647.33,156.44 L647.61,125.05 L647.81,117.85 L648.00,134.15 L648.20,119.69 L648.40,133.54 L648.60,121.12 L648.79,136.07 L648.99,124.67 L649.19,133.31 L649.38,126.55 L649.58,138.95 L649.78,127.38 L649.98,140.97 L650.17,126.95 L650.37,138.79 L650.57,131.14 L650.76,145.12 L651.05,198.65 L651.47,94.61 L651.65,94.13 L651.84,101.82 L652.02,100.19 L652.21,107.38 L652.39,104.65 L652.58,112.84 L652.76,105.14 L652.95,115.56 L653.13,107.10 L653.32,118.28 L653.50,114.85 L653.69,121.03 L653.88,115.24 L654.06,125.20 L654.34,164.83 L654.62,119.96 L654.82,113.72 L655.02,129.08 L655.21,118.72 L655.41,129.06 L655.61,119.51 L655.80,134.02 L656.00,122.27 L656.20,135.59 L656.40,123.39 L656.59,136.45 L656.79,124.27 L656.99,137.67 L657.18,130.05 L657.38,140.14 L657.58,128.72 L657.78,142.12 L658.06,197.56 L658.48,105.75 L658.66,104.79 L658.85,109.72 L659.03,107.42 L659.22,116.45 L659.40,107.03 L659.59,116.95 L659.77,111.34 L659.96,120.36 L660.15,115.22 L660.33,122.50 L660.52,116.37 L660.70,122.88 L660.89,121.51 L661.07,124.84 L661.35,161.89 L661.63,124.50 L661.83,117.08 L662.03,130.75 L662.22,121.85 L662.42,129.85 L662.62,122.65 L662.82,133.77 L663.01,122.92 L663.21,133.90 L663.41,125.55 L663.61,136.18 L663.80,127.67 L664.00,137.75 L664.20,129.43 L664.39,141.52 L664.59,127.50 L664.79,142.31 L665.07,207.00 L665.49,104.31 L665.67,105.21 L665.86,114.18 L666.05,106.83 L666.23,116.81 L666.42,108.43 L666.60,115.67 L666.79,112.90 L666.97,120.32 L667.16,114.01 L667.34,121.58 L667.53,117.73 L667.71,122.95 L667.90,121.33 L668.08,126.46 L668.36,156.48 L668.64,121.36 L668.84,115.66 L669.04,130.54 L669.24,117.26 L669.43,131.09 L669.63,120.95 L669.83,134.70 L670.03,123.67 L670.22,134.31 L670.42,125.35 L670.62,136.70 L670.81,124.55 L671.01,137.36 L671.21,125.85 L671.41,141.17 L671.60,131.47 L671.80,141.35 L672.08,201.07 L672.50,98.98 L672.69,99.32 L672.87,105.53 L673.06,101.29 L673.24,109.30 L673.43,104.88 L673.61,112.86 L673.80,108.36 L673.98,116.21 L674.17,110.44 L674.35,120.34 L674.54,112.53 L674.72,122.90 L674.91,116.68 L675.10,125.99 L675.38,153.72 L675.66,115.95 L675.85,114.41 L676.05,128.64 L676.25,117.23 L676.45,129.59 L676.64,115.55 L676.84,131.14 L677.04,119.49 L677.23,135.06 L677.43,122.56 L677.63,135.03 L677.83,122.83 L678.02,139.17 L678.22,126.75 L678.42,140.07 L678.61,131.24 L678.81,142.77 L679.09,202.28 L679.51,96.80 L679.70,92.09 L679.88,100.50 L680.07,97.62 L680.25,107.19 L680.44,99.09 L680.62,109.09 L680.81,103.83 L681.00,111.62 L681.18,110.04 L681.37,116.55 L681.55,113.76 L681.74,121.85 L681.92,117.66 L682.11,125.87 L682.39,165.24 L682.67,121.90 L682.87,117.32 L683.06,130.18 L683.26,118.48 L683.46,132.88 L683.65,121.49 L683.85,133.57 L684.05,123.43 L684.25,135.51 L684.44,125.34 L684.64,134.45 L684.84,124.52 L685.03,138.43 L685.23,128.27 L685.43,137.89 L685.63,129.60 L685.82,142.87 L686.10,196.93 L686.52,92.18 L686.71,90.04 L686.90,100.41 L687.08,93.34 L687.27,105.84 L687.45,99.52 L687.64,110.25 L687.82,102.23 L688.01,113.58 L688.19,109.05 L688.38,116.10 L688.56,111.49 L688.75,123.15 L688.93,117.94 L689.12,127.79 L689.40,152.76 L689.68,122.95 L689.88,118.28 L690.07,131.40 L690.27,120.09 L690.47,133.24 L690.67,120.59 L690.86,131.88 L691.06,125.72 L691.26,135.88 L691.45,125.40 L691.65,136.80 L691.85,127.89 L692.05,139.44 L692.24,129.77 L692.44,140.03 L692.64,129.96 L692.83,142.97 L693.12,203.25 L693.54,94.61 L693.72,95.67 L693.91,101.00 L694.09,97.14 L694.28,106.04 L694.46,100.20 L694.65,108.16 L694.83,107.06 L695.02,114.92 L695.20,107.44 L695.39,115.90 L695.57,114.59 L695.76,123.48 L695.95,118.46 L696.13,126.55 L696.41,171.52 L696.69,121.57 L696.89,118.44 L697.09,131.07 L697.28,117.33 L697.48,132.25 L697.68,120.59 L697.87,132.35 L698.07,121.28 L698.27,135.59 L698.47,124.24 L698.66,138.16 L698.86,123.81 L699.06,138.04 L699.25,129.63 L699.45,140.84 L699.65,129.04 L699.85,142.09 L700.13,198.27 L700.55,104.49 L700.73,105.51 L700.92,112.31 L701.10,108.81 L701.29,114.13 L701.47,109.12 L701.66,113.04 L701.84,111.48 L702.03,121.91 L702.22,114.81 L702.40,121.16 L702.59,117.90 L702.77,124.78 L702.96,118.95 L703.14,125.40 L703.42,156.37 L703.70,121.65 L703.90,114.49 L704.10,129.11 L704.29,118.31 L704.49,132.32 L704.69,120.76 L704.89,131.58 L705.08,123.95 L705.28,134.63 L705.48,122.80 L705.68,137.10 L705.87,125.51 L706.07,140.17 L706.27,126.09 L706.46,139.18 L706.66,129.62 L706.86,145.16 L707.14,208.99 L707.56,89.33 L707.74,87.84 L707.93,98.32 L708.12,93.00 L708.30,104.09 L708.49,99.50 L708.67,107.78 L708.86,103.18 L709.04,114.40 L709.23,106.99 L709.41,115.01 L709.60,114.38 L709.78,123.21 L709.97,116.85 L710.15,126.77 L710.43,158.38 L710.71,122.59 L710.91,118.43 L711.11,131.89 L711.31,117.38 L711.50,132.69 L711.70,122.96 L711.90,134.39 L712.10,125.00 L712.29,137.22 L712.49,124.69 L712.69,138.58 L712.88,127.48 L713.08,137.17 L713.28,127.32 L713.48,140.00 L713.67,129.42 L713.87,142.08 L714.15,201.43 L714.57,92.89 L714.76,89.67 L714.94,101.91 L715.13,96.78 L715.31,106.71 L715.50,101.11 L715.68,108.31 L715.87,102.86 L716.05,114.15 L716.24,109.06 L716.42,117.94 L716.61,114.29 L716.79,123.29 L716.98,117.40 L717.17,128.25 L717.45,166.87 L717.73,122.03 L717.92,118.00 L718.12,131.19 L718.32,120.85 L718.52,129.08 L718.71,122.64 L718.91,131.36 L719.11,121.82 L719.30,135.85 L719.50,126.09 L719.70,135.77 L719.90,123.97 L720.09,140.33 L720.29,128.61 L720.49,139.45 L720.68,129.59 L720.88,140.00 L721.16,205.02 L721.58,90.63 L721.77,92.56 L721.95,96.45 L722.14,96.27 L722.32,106.79 L722.51,99.86 L722.69,108.37 L722.88,101.48 L723.07,113.07 L723.25,108.55 L723.44,116.21 L723.62,110.78 L723.81,121.53 L723.99,115.95 L724.18,125.16 L724.46,162.45 L724.74,123.41 L724.94,118.42 L725.13,132.33 L725.33,118.46 L725.53,134.64 L725.72,120.19 L725.92,133.09 L726.12,123.59 L726.32,137.13 L726.51,125.44 L726.71,137.09 L726.91,125.78 L727.10,139.02 L727.30,127.11 L727.50,141.84 L727.70,129.82 L727.89,144.90 L728.17,205.36 L728.59,98.12 L728.78,97.87 L728.97,103.70 L729.15,99.78 L729.34,112.59 L729.52,104.10 L729.71,114.15 L729.89,106.12 L730.08,112.16 L730.26,111.73 L730.45,118.91 L730.63,114.79 L730.82,121.96 L731.00,116.99 L731.19,124.10 L731.47,156.39 L731.75,118.24 L731.95,116.82 L732.14,127.96 L732.34,116.01 L732.54,129.42 L732.74,120.95 L732.93,133.42 L733.13,122.35 L733.33,134.59 L733.52,122.20 L733.72,138.35 L733.92,125.19 L734.12,137.79 L734.31,127.12 L734.51,140.05 L734.71,127.86 L734.90,142.08 L735.19,196.86 L735.61,89.86 L735.79,87.68 L735.98,101.30 L736.16,92.92 L736.35,103.58 L736.53,99.59 L736.72,109.08 L736.90,106.30 L737.09,112.81 L737.27,109.21 L737.46,116.13 L737.64,114.82 L737.83,119.37 L738.02,116.95 L738.20,126.21 L738.48,170.16 L738.76,120.49 L738.96,116.17 L739.16,128.23 L739.35,116.79 L739.55,129.90 L739.75,120.92 L739.94,132.21 L740.14,122.38 L740.34,133.80 L740.54,120.78 L740.73,135.35 L740.93,125.95 L741.13,140.62 L741.32,129.64 L741.52,142.88 L741.72,128.88 L741.92,143.80 L742.20,203.44 L742.62,108.54 L742.80,105.86 L742.99,111.38 L743.17,109.02 L743.36,115.87 L743.54,111.28 L743.73,116.30 L743.91,113.67 L744.10,121.15 L744.29,116.26 L744.47,123.62 L744.66,115.80 L744.84,120.25 L745.03,119.91 L745.21,124.56 L745.49,157.99 L745.77,123.60 L745.97,117.50 L746.17,130.14 L746.36,119.91 L746.56,129.01 L746.76,123.43 L746.96,132.99 L747.15,122.20 L747.35,136.15 L747.55,124.30 L747.75,136.00 L747.94,126.14 L748.14,138.48 L748.34,127.25 L748.53,143.69 L748.73,128.02 L748.93,139.62 L749.21,194.65 L749.63,106.61 L749.81,108.22 L750.00,113.75 L750.19,109.44 L750.37,116.44 L750.56,109.05 L750.74,118.78 L750.93,112.60 L751.11,122.35 L751.30,114.69 L751.48,121.65 L751.67,117.49 L751.85,124.81 L752.04,115.97 L752.22,127.53 L752.50,156.87 L752.78,123.22 L752.98,115.50 L753.18,126.96 L753.38,118.53 L753.57,132.67 L753.77,121.42 L753.97,132.07 L754.17,123.93 L754.36,133.38 L754.56,122.57 L754.76,137.12 L754.95,125.48 L755.15,138.03 L755.35,126.07 L755.55,142.35 L755.74,128.43 L755.94,143.26 L756.22,201.94 L756.64,108.06 L756.83,106.76 L757.01,115.11 L757.20,110.68 L757.38,117.07 L757.57,108.51 L757.75,115.10 L757.94,111.63 L758.12,118.18 L758.31,115.25 L758.49,121.94 L758.68,116.17 L758.86,125.34 L759.05,119.94 L759.24,125.74 L759.52,160.82 L759.80,122.58 L759.99,115.69 L760.19,129.34 L760.39,116.78 L760.59,130.95 L760.78,120.57 L760.98,132.74 L761.18,122.36 L761.37,135.80 L761.57,124.64 L761.77,135.82 L761.97,125.17 L762.16,137.05 L762.36,130.35 L762.56,141.32 L762.75,130.56 L762.95,142.51 L763.23,201.32 L763.65,104.34 L763.84,101.15 L764.02,109.60 L764.21,106.50 L764.39,110.68 L764.58,106.20 L764.76,115.97 L764.95,109.10 L765.14,118.87 L765.32,111.37 L765.51,120.83 L765.69,116.69 L765.88,123.71 L766.06,119.31 L766.25,125.61 L766.53,156.38 L766.81,122.98 L767.01,118.78 L767.20,135.68 L767.40,119.61 L767.60,134.98 L767.79,121.13 L767.99,132.55 L768.19,122.82 L768.39,136.37 L768.58,125.17 L768.78,137.75 L768.98,127.41 L769.17,140.09 L769.37,129.65 L769.57,139.39 L769.77,130.13 L769.96,141.43 L770.24,200.63 L770.66,103.62 L770.85,102.54 L771.04,109.28 L771.22,103.83 L771.41,112.24 L771.59,108.55 L771.78,116.30 L771.96,108.00 L772.15,118.28 L772.33,113.34 L772.52,118.54 L772.70,114.11 L772.89,122.48 L773.07,118.81 L773.26,122.64 L773.54,164.90 L773.82,122.09 L774.02,118.07 L774.21,132.43 L774.41,121.42 L774.61,131.68 L774.81,120.80 L775.00,134.32 L775.20,124.70 L775.40,137.72 L775.59,125.29 L775.79,139.49 L775.99,125.36 L776.19,137.66 L776.38,124.46 L776.58,139.79 L776.78,130.91 L776.97,143.94 L777.26,204.54 L777.68,105.74 L777.86,103.66 L778.05,109.61 L778.23,105.06 L778.42,112.62 L778.60,108.10 L778.79,115.01 L778.97,108.89 L779.16,119.87 L779.34,114.00 L779.53,122.80 L779.71,113.63 L779.90,121.60 L780.09,117.31 L780.27,127.52 L780.55,165.69 L780.83,122.68 L781.03,117.27 L781.23,130.32 L781.42,118.48 L781.62,132.41 L781.82,119.83 L782.01,133.35 L782.21,123.22 L782.41,135.65 L782.61,125.23 L782.80,136.19 L783.00,126.81 L783.20,138.72 L783.39,128.79 L783.59,142.97 L783.79,128.82 L783.99,144.20 L784.27,205.47 L784.69,96.89 L784.87,98.78 L785.06,105.85 L785.24,100.76 L785.43,109.24 L785.61,105.23 L785.80,110.64 L785.98,107.49 L786.17,114.68 L786.36,111.30 L786.54,118.35 L786.73,115.29 L786.91,122.35 L787.10,117.01 L787.28,125.81 L787.56,163.65 L787.84,123.10 L788.04,116.44 L788.24,128.93 L788.43,118.93 L788.63,132.36 L788.83,119.74 L789.03,129.81 L789.22,122.81 L789.42,134.66 L789.62,123.78 L789.82,140.55 L790.01,126.04 L790.21,139.90 L790.41,126.21 L790.60,141.19 L790.80,131.09 L791.00,143.05" fill="none" stroke="#5274b9" stroke-width="1.05" clip-path="url(#oclip)"/>
<path d="M345.6,86.3 V212.4" stroke="#111" stroke-width="1.8"/>
<path d="M344.8,211.6 H769.6" stroke="#111" stroke-width="1.8"/>
<path d="M345.3,87.05 H767 Q768.75,87.05 768.75,88.8 V212" fill="none" stroke="#505050" stroke-width="1.7"/>
<text x="558.4" y="239.6" style="font-size:9.2px" fill="#222" text-anchor="middle" textLength="39.6" lengthAdjust="spacingAndGlyphs">Время [с]</text>
<text transform="translate(319.6 149) rotate(-90)" style="font-size:9.3px" fill="#222" text-anchor="middle">Освещенность [лк]</text>

<!-- spectrum -->
<text x="526.3" y="271.3" style="font-size:9px" fill="#2a2aff" textLength="30.0" lengthAdjust="spacingAndGlyphs">Спектр</text>
<rect x="347" y="278" width="421.5" height="194" fill="#f4f4f4"/>
<line x1="347" y1="291.40" x2="768" y2="291.40" class="grid"/>
<text x="340.8" y="295.00" class="tk" text-anchor="end" textLength="8.0" lengthAdjust="spacingAndGlyphs">-8</text>
<line x1="347" y1="307.14" x2="768" y2="307.14" class="grid"/>
<text x="340.8" y="310.74" class="tk" text-anchor="end" textLength="13.0" lengthAdjust="spacingAndGlyphs">-16</text>
<line x1="347" y1="322.88" x2="768" y2="322.88" class="grid"/>
<text x="340.8" y="326.48" class="tk" text-anchor="end" textLength="13.0" lengthAdjust="spacingAndGlyphs">-24</text>
<line x1="347" y1="338.62" x2="768" y2="338.62" class="grid"/>
<text x="340.8" y="342.22" class="tk" text-anchor="end" textLength="13.0" lengthAdjust="spacingAndGlyphs">-32</text>
<line x1="347" y1="354.36" x2="768" y2="354.36" class="grid"/>
<text x="340.8" y="357.96" class="tk" text-anchor="end" textLength="13.0" lengthAdjust="spacingAndGlyphs">-40</text>
<line x1="347" y1="370.10" x2="768" y2="370.10" class="grid"/>
<text x="340.8" y="373.70" class="tk" text-anchor="end" textLength="13.0" lengthAdjust="spacingAndGlyphs">-48</text>
<line x1="347" y1="385.84" x2="768" y2="385.84" class="grid"/>
<text x="340.8" y="389.44" class="tk" text-anchor="end" textLength="13.0" lengthAdjust="spacingAndGlyphs">-56</text>
<line x1="347" y1="401.58" x2="768" y2="401.58" class="grid"/>
<text x="340.8" y="405.18" class="tk" text-anchor="end" textLength="13.0" lengthAdjust="spacingAndGlyphs">-64</text>
<line x1="347" y1="417.32" x2="768" y2="417.32" class="grid"/>
<text x="340.8" y="420.92" class="tk" text-anchor="end" textLength="13.0" lengthAdjust="spacingAndGlyphs">-72</text>
<line x1="347" y1="433.06" x2="768" y2="433.06" class="grid"/>
<text x="340.8" y="436.66" class="tk" text-anchor="end" textLength="13.0" lengthAdjust="spacingAndGlyphs">-80</text>
<line x1="347" y1="448.80" x2="768" y2="448.80" class="grid"/>
<text x="340.8" y="452.40" class="tk" text-anchor="end" textLength="13.0" lengthAdjust="spacingAndGlyphs">-88</text>
<line x1="347" y1="464.54" x2="768" y2="464.54" class="grid"/>
<text x="340.8" y="468.14" class="tk" text-anchor="end" textLength="13.0" lengthAdjust="spacingAndGlyphs">-96</text>
<text x="346.50" y="489" class="tk" text-anchor="middle" textLength="5.0" lengthAdjust="spacingAndGlyphs">0</text>
<line x1="391.50" y1="278" x2="391.50" y2="472" class="grid"/>
<text x="391.50" y="489" class="tk" text-anchor="middle" textLength="15.0" lengthAdjust="spacingAndGlyphs">320</text>
<line x1="436.50" y1="278" x2="436.50" y2="472" class="grid"/>
<text x="436.50" y="489" class="tk" text-anchor="middle" textLength="15.0" lengthAdjust="spacingAndGlyphs">640</text>
<line x1="481.50" y1="278" x2="481.50" y2="472" class="grid"/>
<text x="481.50" y="489" class="tk" text-anchor="middle" textLength="15.0" lengthAdjust="spacingAndGlyphs">960</text>
<line x1="526.50" y1="278" x2="526.50" y2="472" class="grid"/>
<text x="526.50" y="489" class="tk" text-anchor="middle" textLength="20.0" lengthAdjust="spacingAndGlyphs">1280</text>
<line x1="571.50" y1="278" x2="571.50" y2="472" class="grid"/>
<text x="571.50" y="489" class="tk" text-anchor="middle" textLength="20.0" lengthAdjust="spacingAndGlyphs">1600</text>
<line x1="616.50" y1="278" x2="616.50" y2="472" class="grid"/>
<text x="616.50" y="489" class="tk" text-anchor="middle" textLength="20.0" lengthAdjust="spacingAndGlyphs">1920</text>
<line x1="661.50" y1="278" x2="661.50" y2="472" class="grid"/>
<text x="661.50" y="489" class="tk" text-anchor="middle" textLength="20.0" lengthAdjust="spacingAndGlyphs">2240</text>
<line x1="706.50" y1="278" x2="706.50" y2="472" class="grid"/>
<text x="706.50" y="489" class="tk" text-anchor="middle" textLength="20.0" lengthAdjust="spacingAndGlyphs">2560</text>
<line x1="751.50" y1="278" x2="751.50" y2="472" class="grid"/>
<text x="751.50" y="489" class="tk" text-anchor="middle" textLength="20.0" lengthAdjust="spacingAndGlyphs">2880</text>
<path d="M347.7,472.0 L347.70,417.58 L347.98,427.79 L348.26,431.86 L348.54,414.22 L348.82,413.04 L349.10,419.39 L349.38,413.39 L349.66,418.07 L349.94,420.27 L350.22,424.34 L350.50,425.73 L350.78,422.85 L351.06,428.66 L351.34,424.24 L351.62,422.53 L351.90,432.87 L352.18,425.05 L352.46,427.22 L352.74,418.68 L353.02,413.87 L353.30,417.17 L353.58,415.13 L353.86,415.25 L354.14,422.02 L354.42,367.94 L354.70,365.18 L354.98,364.00 L355.26,366.76 L355.54,369.51 L355.82,407.46 L356.10,410.68 L356.38,417.15 L356.66,413.63 L356.94,419.47 L357.22,413.76 L357.50,428.74 L357.78,424.41 L358.06,419.54 L358.34,429.40 L358.62,418.62 L358.90,428.44 L359.18,418.77 L359.46,416.76 L359.74,425.01 L360.02,412.78 L360.30,420.57 L360.58,417.88 L360.86,433.83 L361.14,431.01 L361.42,417.08 L361.70,411.10 L361.98,416.95 L362.26,409.82 L362.54,427.33 L362.82,362.23 L363.10,359.48 L363.38,356.72 L363.66,359.08 L363.94,361.84 L364.22,423.32 L364.50,415.17 L364.78,415.61 L365.06,419.96 L365.34,427.03 L365.62,433.63 L365.90,430.45 L366.18,416.67 L366.46,430.14 L366.74,433.15 L367.02,429.45 L367.30,423.57 L367.58,422.14 L367.86,415.87 L368.14,416.38 L368.42,413.93 L368.70,415.78 L368.98,425.20 L369.26,431.90 L369.54,413.81 L369.82,428.57 L370.10,419.09 L370.38,425.87 L370.66,412.95 L370.94,425.32 L371.22,384.66 L371.50,381.91 L371.78,379.15 L372.06,379.54 L372.34,382.30 L372.62,385.05 L372.90,426.18 L373.18,412.46 L373.46,415.49 L373.74,417.16 L374.02,412.50 L374.30,422.99 L374.58,431.61 L374.86,422.31 L375.14,429.32 L375.42,424.46 L375.70,425.65 L375.98,423.42 L376.26,415.70 L376.54,418.14 L376.82,426.71 L377.10,418.04 L377.38,416.67 L377.66,417.58 L377.94,421.43 L378.22,412.94 L378.50,420.79 L378.78,428.18 L379.06,367.84 L379.34,365.08 L379.62,362.33 L379.90,362.53 L380.18,365.28 L380.46,368.03 L380.74,428.71 L381.02,430.69 L381.30,418.22 L381.58,426.78 L381.86,424.93 L382.14,415.59 L382.42,422.69 L382.70,418.73 L382.98,419.81 L383.26,415.69 L383.54,434.91 L383.82,428.07 L384.10,415.86 L384.38,426.39 L384.66,415.96 L384.94,432.50 L385.22,435.22 L385.50,417.17 L385.78,427.68 L386.06,424.69 L386.34,414.46 L386.62,429.01 L386.90,411.84 L387.18,423.25 L387.46,425.51 L387.74,387.02 L388.02,384.27 L388.30,381.51 L388.58,384.27 L388.86,387.02 L389.14,430.08 L389.42,428.74 L389.70,419.96 L389.98,417.18 L390.26,424.76 L390.54,422.92 L390.82,423.29 L391.10,436.85 L391.38,432.00 L391.66,415.81 L391.94,430.31 L392.22,417.05 L392.50,426.96 L392.78,432.86 L393.06,437.70 L393.34,433.11 L393.62,430.93 L393.90,428.45 L394.18,428.35 L394.46,425.66 L394.74,426.34 L395.02,434.97 L395.30,428.98 L395.58,413.01 L395.86,432.32 L396.14,378.56 L396.42,375.81 L396.70,373.05 L396.98,373.84 L397.26,376.59 L397.54,379.35 L397.82,413.99 L398.10,427.65 L398.38,434.01 L398.66,436.15 L398.94,419.00 L399.22,432.40 L399.50,437.01 L399.78,426.80 L400.06,421.55 L400.34,426.97 L400.62,436.78 L400.90,431.40 L401.18,434.54 L401.46,440.06 L401.74,419.64 L402.02,430.72 L402.30,437.86 L402.58,421.74 L402.86,419.69 L403.14,422.97 L403.42,434.27 L403.70,434.76 L403.98,426.65 L404.26,424.51 L404.54,417.26 L404.82,407.68 L405.10,404.92 L405.38,402.17 L405.66,402.56 L405.94,405.32 L406.22,408.07 L406.50,436.25 L406.78,436.59 L407.06,437.57 L407.34,434.89 L407.62,435.93 L407.90,428.58 L408.18,442.77 L408.46,442.23 L408.74,430.65 L409.02,430.52 L409.30,429.92 L409.58,429.93 L409.86,431.39 L410.14,434.08 L410.42,430.38 L410.70,445.05 L410.98,442.61 L411.26,431.54 L411.54,443.66 L411.82,435.74 L412.10,440.98 L412.38,436.68 L412.66,427.35 L412.94,430.50 L413.22,434.56 L413.50,398.63 L413.78,395.87 L414.06,394.30 L414.34,397.05 L414.62,399.81 L414.90,431.94 L415.18,427.12 L415.46,435.40 L415.74,431.73 L416.02,440.73 L416.30,438.71 L416.58,436.99 L416.86,453.70 L417.14,445.84 L417.42,443.44 L417.70,455.73 L417.98,440.34 L418.26,442.38 L418.54,438.04 L418.82,450.70 L419.10,449.03 L419.38,439.89 L419.66,451.16 L419.94,442.45 L420.22,451.45 L420.50,452.76 L420.78,453.58 L421.06,454.46 L421.34,449.25 L421.62,454.59 L421.90,436.01 L422.18,433.26 L422.46,430.50 L422.74,430.50 L423.02,433.26 L423.30,436.01 L423.58,459.96 L423.86,448.33 L424.14,457.96 L424.42,461.73 L424.70,462.18 L424.98,454.07 L425.26,469.53 L425.54,451.70 L425.82,458.62 L426.10,466.31 L426.38,467.39 L426.66,458.23 L426.94,459.27 L427.22,466.50 L427.50,466.66 L427.78,464.35 L428.06,455.17 L428.34,463.72 L428.62,457.26 L428.90,461.08 L429.18,462.29 L429.46,463.36 L429.74,458.73 L430.02,462.35 L430.30,453.33 L430.58,450.57 L430.86,447.82 L431.14,447.82 L431.42,450.57 L431.70,453.33 L431.98,458.75 L432.26,468.39 L432.54,473.39 L432.82,468.24 L433.10,472.07 L433.38,473.39 L433.66,470.46 L433.94,473.39 L434.22,473.39 L434.50,473.39 L434.5,472.0 Z" fill="#4667a6" stroke="none"/>
<line x1="347" y1="471.1" x2="768" y2="471.1" stroke="#6e8fcf" stroke-width="1"/>
<path d="M345.55,276.8 V473.2" stroke="#111" stroke-width="1.8"/>
<path d="M344.8,472.3 H769.6" stroke="#111" stroke-width="1.8"/>
<path d="M345.2,277.5 H767 Q768.8,277.5 768.8,279.3" fill="none" stroke="#3e3e3e" stroke-width="1.7"/><path d="M768.8,279.3 V472.4" stroke="#5a5a5a" stroke-width="1.6"/>
<text x="557.3" y="499.8" style="font-size:9.2px" fill="#222" text-anchor="middle" textLength="51.3" lengthAdjust="spacingAndGlyphs">Частота [Гц]</text>
<text transform="translate(320.6 374.2) rotate(-90)" style="font-size:9.2px" fill="#222" text-anchor="middle" textLength="65" lengthAdjust="spacingAndGlyphs">Амплитуда [дБ]</text>
</svg>
</body></html>
